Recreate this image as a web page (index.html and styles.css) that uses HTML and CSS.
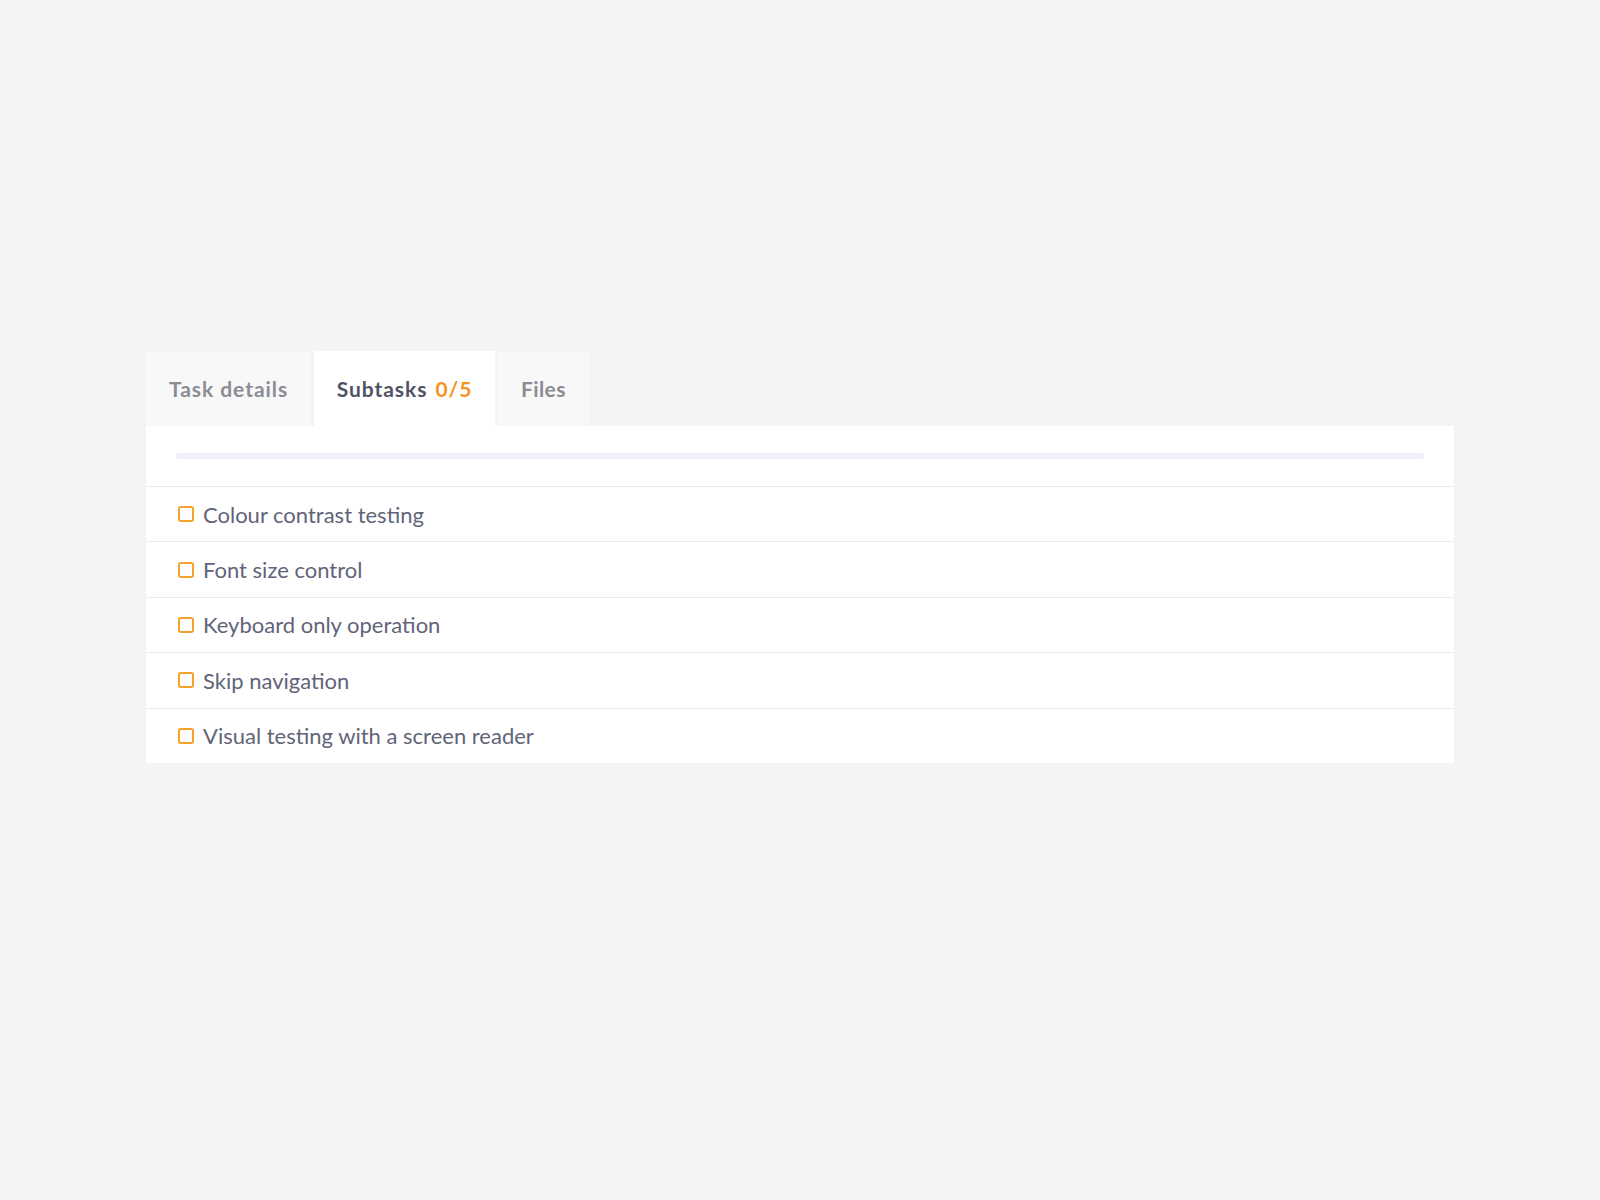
FILE: index.html
```html
<!DOCTYPE html>
<html lang="en">
<head>
<meta charset="utf-8">
<title>Subtasks</title>
<link rel="stylesheet" href="styles.css">
</head>
<body>
<div class="wrap">
  <div class="tabs">
    <div class="tab">Task details</div>
    <div class="tab active">Subtasks&nbsp;<span class="count">0/5</span></div>
    <div class="tab tab-short">Files</div>
  </div>
  <div class="panel">
    <div class="progress-area"><div class="progress"></div></div>
    <ul class="list">
      <li class="item"><span class="box"></span><span class="label">Colour contrast testing</span></li>
      <li class="item"><span class="box"></span><span class="label">Font size control</span></li>
      <li class="item"><span class="box"></span><span class="label">Keyboard only operation</span></li>
      <li class="item"><span class="box"></span><span class="label">Skip navigation</span></li>
      <li class="item"><span class="box"></span><span class="label">Visual testing with a screen reader</span></li>
    </ul>
  </div>
</div>
</body>
</html>
```
FILE: styles.css
```css
html, body {
  margin: 0;
  padding: 0;
  background: #f4f4f6;
  font-family: "Lato", "Noto Sans", sans-serif;
}
.wrap {
  padding: 351px 146px 0 146px;
}
.tabs {
  display: flex;
  gap: 2.5px;
  height: 75px;
}
.tab {
  display: flex;
  align-items: center;
  padding: 0 23px;
  background: #f8f8f9;
  color: #8b8d94;
  font-size: 21px;
  font-weight: 700;
  letter-spacing: 0.95px;
}
.tab.active {
  background: #ffffff;
  color: #4f5366;
}
.tab-short {
  letter-spacing: 0.4px;
}
.count {
  color: #f7941d;
  margin-left: 2px;
}
.panel {
  background: #ffffff;
}
.progress-area {
  height: 60px;
  padding: 0 30px;
  display: flex;
  align-items: center;
}
.progress {
  flex: 1;
  height: 6px;
  border-radius: 3px;
  background: #edf1f7;
}
.list {
  list-style: none;
  margin: 0;
  padding: 0;
}
.item {
  display: flex;
  align-items: center;
  height: 54.4px;
  border-top: 1px solid #ececef;
  padding-left: 32px;
}
.box {
  width: 12px;
  height: 12px;
  border: 2px solid #f7a12a;
  border-radius: 3px;
  margin-right: 9px;
}
.label {
  font-size: 22px;
  color: #616478;
}
```
